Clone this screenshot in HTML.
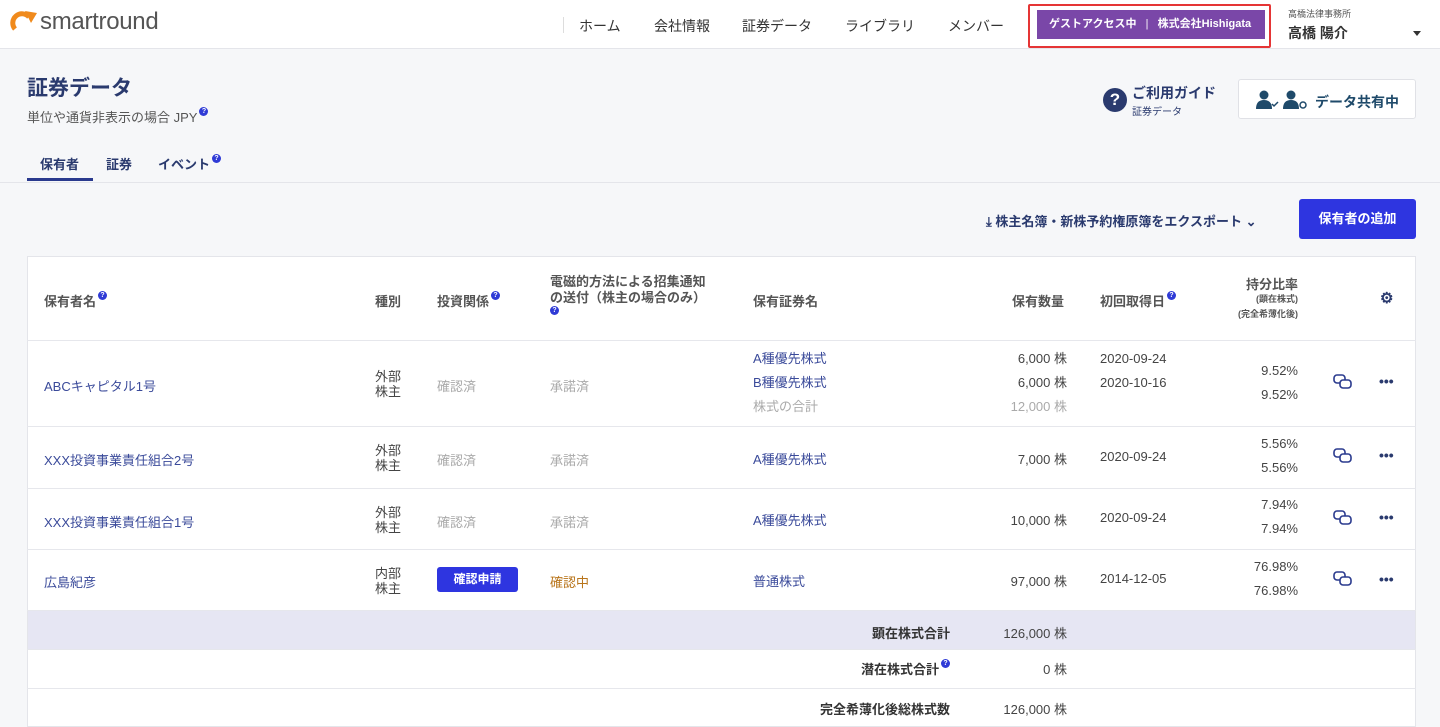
<!DOCTYPE html>
<html><head><meta charset="utf-8"><style>
*{margin:0;padding:0;box-sizing:border-box}
body{width:1440px;height:727px;overflow:hidden;background:#f6f7f9;font-family:"Liberation Sans","Noto Sans CJK JP",sans-serif;position:relative;color:#333}
.a{position:absolute;white-space:nowrap}
.hdr{position:absolute;left:0;top:0;width:1440px;height:49px;background:#fff;border-bottom:1px solid #e4e5ea}
.nav{font-size:14px;color:#333;top:16px}
.b{font-weight:bold}
.th{font-size:13px;color:#555;font-weight:bold}
.td{font-size:13px;color:#444}
.navy{color:#2a3a6e}
.link{color:#3a4a9a}
.gray{color:#aaa}
.q{display:inline-block;width:9px;height:9px;border-radius:50%;background:#2f3bd6;color:#fff;font-size:7px;line-height:9px;text-align:center;vertical-align:top;margin-left:2px;font-weight:bold}
.tbl{position:absolute;left:27px;top:256px;width:1389px;height:471px;background:#fff;border:1px solid #e4e5ea}
.hl{position:absolute;left:27px;width:1389px;height:1px;background:#e6e7ec}
</style></head><body>
<div class="hdr"></div>
<svg class="a" style="left:10px;top:10px" width="30" height="24" viewBox="0 0 30 24"><path d="M5 19 A9 9 0 0 1 19 7" stroke="#f08a1c" stroke-width="5" fill="none"/><path d="M15 1 L27 3 L21 13 Z" fill="#f08a1c"/></svg>
<div class="a" style="left:40px;top:8px;font-size:24px;color:#555;letter-spacing:-0.3px">smartround</div>
<div class="a" style="left:563px;top:17px;width:1px;height:16px;background:#ddd"></div>
<div class="a nav" style="left:579px">ホーム</div>
<div class="a nav" style="left:654px">会社情報</div>
<div class="a nav" style="left:742px">証券データ</div>
<div class="a nav" style="left:845px">ライブラリ</div>
<div class="a nav" style="left:948px">メンバー</div>
<div class="a" style="left:1028px;top:4px;width:243px;height:44px;border:2px solid #e53535;border-radius:2px"></div>
<div class="a" style="left:1037px;top:10px;width:228px;height:29px;background:#7a47a8;color:#fff;font-size:11px;font-weight:bold;line-height:29px;padding-left:12px">ゲストアクセス中 <span style="opacity:.6;margin:0 6px">|</span> 株式会社Hishigata</div>
<div class="a" style="left:1288px;top:7px;font-size:9px;color:#555">高橋法律事務所</div>
<div class="a b" style="left:1288px;top:23px;font-size:14px;color:#333">高橋 陽介</div>
<div class="a" style="left:1413px;top:31px;border:4px solid transparent;border-top:5px solid #333"></div>

<div class="a b navy" style="left:27px;top:72px;font-size:21px">証券データ</div>
<div class="a" style="left:27px;top:107px;font-size:13px;color:#555">単位や通貨非表示の場合 JPY<span class="q">?</span></div>
<div class="a b navy" style="left:40px;top:154px;font-size:13px">保有者</div>
<div class="a b navy" style="left:106px;top:154px;font-size:13px">証券</div>
<div class="a b navy" style="left:158px;top:154px;font-size:13px">イベント<span class="q">?</span></div>
<div class="a" style="left:27px;top:178px;width:66px;height:3px;background:#2a3a8e"></div>
<div class="a" style="left:0;top:182px;width:1440px;height:1px;background:#e4e5ea"></div>

<div class="a" style="left:1103px;top:88px;width:24px;height:24px;border-radius:50%;background:#2a3a6e;color:#fff;font-weight:bold;font-size:17px;text-align:center;line-height:24px">?</div>
<div class="a b navy" style="left:1132px;top:83px;font-size:14px">ご利用ガイド</div>
<div class="a navy" style="left:1132px;top:103px;font-size:10px">証券データ</div>
<div class="a" style="left:1238px;top:79px;width:178px;height:40px;background:#fff;border:1px solid #e0e1e6;border-radius:3px"></div>
<svg class="a" style="left:1255px;top:89px" width="56" height="22" viewBox="0 0 56 22"><g fill="#1f4a6a"><circle cx="9" cy="6" r="4.5"/><path d="M1 20 Q1 11 9 11 Q17 11 17 20Z"/><circle cx="36" cy="6" r="4.5"/><path d="M28 20 Q28 11 36 11 Q44 11 44 20Z"/></g><path d="M17 15 l2 2 4 -4" stroke="#1f4a6a" stroke-width="1.5" fill="none"/><circle cx="48" cy="16" r="3" stroke="#1f4a6a" stroke-width="1.5" fill="none"/></svg>
<div class="a b" style="left:1315px;top:92px;font-size:14px;color:#1f4a6a">データ共有中</div>

<div class="a b navy" style="left:986px;top:211px;font-size:13px">⤓ 株主名簿・新株予約権原簿をエクスポート ⌄</div>
<div class="a b" style="left:1299px;top:199px;width:117px;height:40px;background:#2e35e0;border-radius:3px;color:#fff;font-size:13px;text-align:center;line-height:40px">保有者の追加</div>

<div class="tbl"></div>
<div class="a" style="left:28px;top:611px;width:1387px;height:38px;background:#e6e6f3"></div>
<div class="hl" style="top:340px"></div><div class="hl" style="top:426px"></div><div class="hl" style="top:488px"></div><div class="hl" style="top:549px"></div><div class="hl" style="top:610px"></div><div class="hl" style="top:649px"></div><div class="hl" style="top:688px"></div>

<div class="a th" style="left:44px;top:291px">保有者名<span class="q">?</span></div>
<div class="a th" style="left:375px;top:291px">種別</div>
<div class="a th" style="left:437px;top:291px">投資関係<span class="q">?</span></div>
<div class="a th" style="left:550px;top:274px;line-height:16px">電磁的方法による招集通知<br>の送付（株主の場合のみ）<br><span class="q" style="margin:0">?</span></div>
<div class="a th" style="left:753px;top:291px">保有証券名</div>
<div class="a th" style="left:1012px;top:291px">保有数量</div>
<div class="a th" style="left:1100px;top:291px">初回取得日<span class="q">?</span></div>
<div class="a th" style="left:1216px;top:274px;width:82px;text-align:right">持分比率</div>
<div class="a th" style="left:1200px;top:292px;width:98px;text-align:right;font-size:9px;line-height:15px">(顕在株式)<br>(完全希薄化後)</div>
<div class="a b navy" style="left:1380px;top:289px;font-size:15px">⚙</div>

<!-- row1 -->
<div class="a td link" style="left:44px;top:376px">ABCキャピタル1号</div>
<div class="a td" style="left:375px;top:369px;line-height:15px">外部<br>株主</div>
<div class="a td gray" style="left:437px;top:376px">確認済</div>
<div class="a td gray" style="left:550px;top:376px">承諾済</div>
<div class="a td link" style="left:753px;top:347px;line-height:24px">A種優先株式<br>B種優先株式<br><span class="gray">株式の合計</span></div>
<div class="a td" style="left:967px;top:347px;width:100px;text-align:right;line-height:24px">6,000 株<br>6,000 株<br><span class="gray">12,000 株</span></div>
<div class="a td" style="left:1100px;top:347px;line-height:24px">2020-09-24<br>2020-10-16</div>
<div class="a td" style="left:1200px;top:359px;width:98px;text-align:right;line-height:24px">9.52%<br>9.52%</div>

<!-- row2 -->
<div class="a td link" style="left:44px;top:450px">XXX投資事業責任組合2号</div>
<div class="a td" style="left:375px;top:443px;line-height:15px">外部<br>株主</div>
<div class="a td gray" style="left:437px;top:450px">確認済</div>
<div class="a td gray" style="left:550px;top:450px">承諾済</div>
<div class="a td link" style="left:753px;top:449px">A種優先株式</div>
<div class="a td" style="left:967px;top:449px;width:100px;text-align:right">7,000 株</div>
<div class="a td" style="left:1100px;top:449px">2020-09-24</div>
<div class="a td" style="left:1200px;top:432px;width:98px;text-align:right;line-height:24px">5.56%<br>5.56%</div>

<!-- row3 -->
<div class="a td link" style="left:44px;top:512px">XXX投資事業責任組合1号</div>
<div class="a td" style="left:375px;top:505px;line-height:15px">外部<br>株主</div>
<div class="a td gray" style="left:437px;top:512px">確認済</div>
<div class="a td gray" style="left:550px;top:512px">承諾済</div>
<div class="a td link" style="left:753px;top:510px">A種優先株式</div>
<div class="a td" style="left:967px;top:510px;width:100px;text-align:right">10,000 株</div>
<div class="a td" style="left:1100px;top:510px">2020-09-24</div>
<div class="a td" style="left:1200px;top:493px;width:98px;text-align:right;line-height:24px">7.94%<br>7.94%</div>

<!-- row4 -->
<div class="a td link" style="left:44px;top:572px">広島紀彦</div>
<div class="a td" style="left:375px;top:566px;line-height:15px">内部<br>株主</div>
<div class="a b" style="left:437px;top:567px;width:81px;height:25px;background:#2e35e0;border-radius:3px;color:#fff;font-size:12px;text-align:center;line-height:25px">確認申請</div>
<div class="a td" style="left:550px;top:572px;color:#b8741a">確認中</div>
<div class="a td link" style="left:753px;top:571px">普通株式</div>
<div class="a td" style="left:967px;top:571px;width:100px;text-align:right">97,000 株</div>
<div class="a td" style="left:1100px;top:571px">2014-12-05</div>
<div class="a td" style="left:1200px;top:555px;width:98px;text-align:right;line-height:24px">76.98%<br>76.98%</div>

<!-- icons -->
<svg class="a" style="left:1333px;top:374px" width="20" height="16"><rect x="1" y="1" width="11" height="8" rx="3" fill="none" stroke="#2a3a8e" stroke-width="1.6"/><rect x="7" y="6" width="11" height="8" rx="3" fill="#fff" stroke="#2a3a8e" stroke-width="1.6"/></svg>
<svg class="a" style="left:1333px;top:448px" width="20" height="16"><rect x="1" y="1" width="11" height="8" rx="3" fill="none" stroke="#2a3a8e" stroke-width="1.6"/><rect x="7" y="6" width="11" height="8" rx="3" fill="#fff" stroke="#2a3a8e" stroke-width="1.6"/></svg>
<svg class="a" style="left:1333px;top:510px" width="20" height="16"><rect x="1" y="1" width="11" height="8" rx="3" fill="none" stroke="#2a3a8e" stroke-width="1.6"/><rect x="7" y="6" width="11" height="8" rx="3" fill="#fff" stroke="#2a3a8e" stroke-width="1.6"/></svg>
<svg class="a" style="left:1333px;top:571px" width="20" height="16"><rect x="1" y="1" width="11" height="8" rx="3" fill="none" stroke="#2a3a8e" stroke-width="1.6"/><rect x="7" y="6" width="11" height="8" rx="3" fill="#fff" stroke="#2a3a8e" stroke-width="1.6"/></svg>
<div class="a b navy" style="left:1379px;top:373px;font-size:14px">•••</div>
<div class="a b navy" style="left:1379px;top:447px;font-size:14px">•••</div>
<div class="a b navy" style="left:1379px;top:509px;font-size:14px">•••</div>
<div class="a b navy" style="left:1379px;top:571px;font-size:14px">•••</div>

<!-- totals -->
<div class="a th" style="left:750px;top:623px;width:200px;text-align:right;color:#333">顕在株式合計</div>
<div class="a td" style="left:967px;top:623px;width:100px;text-align:right">126,000 株</div>
<div class="a th" style="left:750px;top:659px;width:200px;text-align:right;color:#333">潜在株式合計<span class="q">?</span></div>
<div class="a td" style="left:967px;top:659px;width:100px;text-align:right">0 株</div>
<div class="a th" style="left:750px;top:699px;width:200px;text-align:right;color:#333">完全希薄化後総株式数</div>
<div class="a td" style="left:967px;top:699px;width:100px;text-align:right">126,000 株</div>
</body></html>
